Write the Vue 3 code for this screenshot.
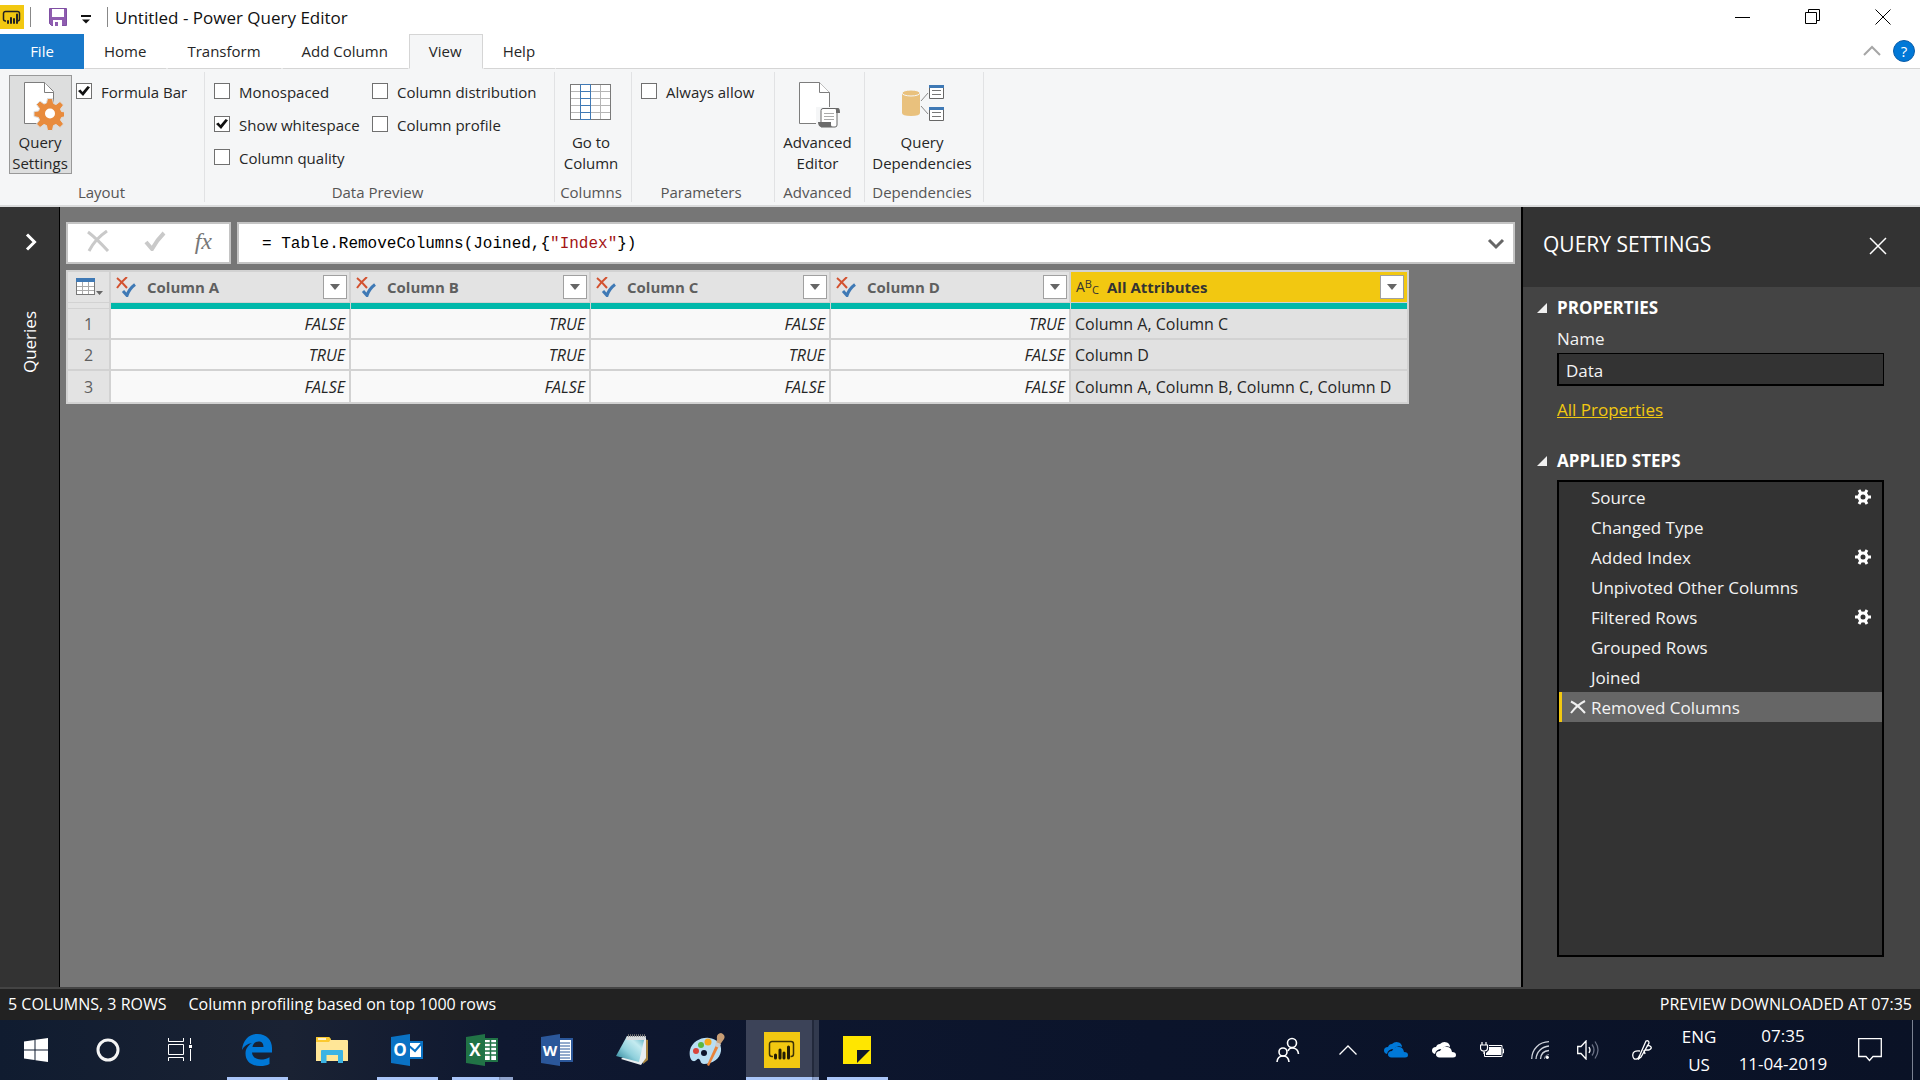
<script setup>
import { ref } from 'vue'

const tabs = ['Home', 'Transform', 'Add Column', 'View', 'Help']
const activeTab = ref('View')

const previewOptions = ref([
  [
    { label: 'Monospaced', on: false },
    { label: 'Show whitespace', on: true },
    { label: 'Column quality', on: false },
  ],
  [
    { label: 'Column distribution', on: false },
    { label: 'Column profile', on: false },
  ],
])
const formulaBar = ref(true)
const alwaysAllow = ref(false)

const columns = ['Column A', 'Column B', 'Column C', 'Column D']
const rows = [
  { flags: ['FALSE', 'TRUE', 'FALSE', 'TRUE'], all: 'Column A, Column C' },
  { flags: ['TRUE', 'TRUE', 'TRUE', 'FALSE'], all: 'Column D' },
  { flags: ['FALSE', 'FALSE', 'FALSE', 'FALSE'], all: 'Column A, Column B, Column C, Column D' },
]

const queryName = ref('Data')
const steps = [
  { name: 'Source', gear: true },
  { name: 'Changed Type' },
  { name: 'Added Index', gear: true },
  { name: 'Unpivoted Other Columns' },
  { name: 'Filtered Rows', gear: true },
  { name: 'Grouped Rows' },
  { name: 'Joined' },
  { name: 'Removed Columns' },
]
const selectedStep = ref('Removed Columns')
</script>

<template>
  <div class="window">
    <header class="titlebar">
      <svg class="app-icon" width="24" height="24" viewBox="0 0 24 24" aria-hidden="true">
        <rect width="24" height="24" fill="#f2c811" />
        <path d="M6 16H5.500a2 2 0 0 1-2-2V8.500a2 2 0 0 1 2-2h12a2 2 0 0 1 2 2V14a2 2 0 0 1-2 2" fill="none" stroke="#222" stroke-width="1.500" />
        <path d="M8 18v-2M11 18v-5M14 18v-4M17 18V9.500" stroke="#222" stroke-width="2" stroke-linecap="round" />
      </svg>
      <span class="bar-sep"></span>
      <button class="plain save" aria-label="Save">
        <svg width="20" height="20" viewBox="0 0 20 20">
          <path d="M1.500 1.500h17v17H3.500l-2-2z" fill="#8f5db0" stroke="#7f4fa3" />
          <path d="M4 2h12v8H4z" fill="#fff" />
          <path d="M5 13h9v6H5z" fill="#fff" />
          <path d="M7 15h3v4H7z" fill="#8f5db0" />
        </svg>
      </button>
      <button class="plain more" aria-label="Customize toolbar">
        <svg width="10" height="9" viewBox="0 0 10 9"><path d="M0 1h10" stroke="#111" stroke-width="2" /><path d="M1 4.500h8L5 8.500z" fill="#111" /></svg>
      </button>
      <span class="bar-sep"></span>
      <h1>Untitled - Power Query Editor</h1>
      <div class="win-buttons">
        <button class="plain" aria-label="Minimize"><svg width="16" height="16" viewBox="0 0 16 16"><path d="M0 8.500h15" stroke="#000" /></svg></button>
        <button class="plain" aria-label="Restore"><svg width="16" height="16" viewBox="0 0 16 16"><path d="M.5 3.500h11v11H.5zM3.500 3.500v-3h11v11h-3" fill="none" stroke="#000" /></svg></button>
        <button class="plain" aria-label="Close"><svg width="16" height="16" viewBox="0 0 16 16"><path d="M.5.500l15 15M15.500.500l-15 15" stroke="#000" /></svg></button>
      </div>
    </header>

    <nav class="tabs">
      <button class="file">File</button>
      <button v-for="t in tabs" :key="t" class="tab" :class="{ active: t === activeTab }" @click="activeTab = t">{{ t }}</button>
      <span class="tabs-fill">
        <button class="plain" aria-label="Collapse ribbon"><svg width="18" height="12" viewBox="0 0 18 12"><path d="M1 10l8-8 8 8" fill="none" stroke="#a6a6a6" stroke-width="2" /></svg></button>
        <button class="help" aria-label="Help topics">?</button>
      </span>
    </nav>

    <section class="ribbon">
      <div class="group g-layout">
        <div class="group-body">
          <button class="big pressed">
            <svg width="48" height="56" viewBox="0 0 48 56">
              <path d="M8.500 6.500h20l9 9v32h-29z" fill="#fff" stroke="#7d7d7d" />
              <path d="M28.500 6.500v10h9" fill="#fff" stroke="#7d7d7d" />
              <g fill="#e88b3d" stroke="#dddede" stroke-width="1">
                <path d="M31.500 22.500h5l1 5 2.500 1 4-3 3.500 3.500-3 4 1 2.500 4.500.5v4.500l-4.500 1-1 2.500 3 4-3.500 3.500-4-3-2.500 1-1 5h-5l-1-5-2.500-1-4 3-3.500-3.500 3-4-1-2.500-4.500-1V35.500l4.500-.5 1-2.500-3-4 3.500-3.500 4 3 2.500-1z" />
                <circle cx="34" cy="37.500" r="5" fill="#fff" stroke="none" />
              </g>
            </svg>
            <span>Query<br>Settings</span>
          </button>
          <div class="checks first">
            <label class="check"><input v-model="formulaBar" type="checkbox"><span>Formula Bar</span></label>
          </div>
        </div>
        <div class="group-name">Layout</div>
      </div>

      <div class="group g-preview">
        <div class="group-body">
          <div v-for="(col, i) in previewOptions" :key="i" class="checks wide">
            <label v-for="o in col" :key="o.label" class="check"><input v-model="o.on" type="checkbox"><span>{{ o.label }}</span></label>
          </div>
        </div>
        <div class="group-name">Data Preview</div>
      </div>

      <div class="group g-columns">
        <div class="group-body">
          <button class="big">
            <svg width="48" height="56" viewBox="0 0 48 56">
              <rect x="3.500" y="8.500" width="40" height="35" fill="#fff" />
              <path d="M4 15.500h39M4 22.500h39M4 29.500h39M4 36.500h39M33.500 9v34" stroke="#b5b5b5" />
              <rect x="3.500" y="8.500" width="40" height="35" fill="none" stroke="#7a7a7a" />
              <path d="M13.500 8.500h10v35h-10zM13.500 15.500h10M13.500 22.500h10M13.500 29.500h10M13.500 36.500h10" fill="none" stroke="#3f79b5" />
            </svg>
            <span>Go to<br>Column</span>
          </button>
        </div>
        <div class="group-name">Columns</div>
      </div>

      <div class="group g-params">
        <div class="group-body">
          <div class="checks">
            <label class="check"><input v-model="alwaysAllow" type="checkbox"><span>Always allow</span></label>
          </div>
        </div>
        <div class="group-name">Parameters</div>
      </div>

      <div class="group g-advanced">
        <div class="group-body">
          <button class="big">
            <svg width="48" height="56" viewBox="0 0 48 56">
              <path d="M6.500 6.500h20l10 10v31h-30z" fill="#fff" stroke="#7d7d7d" />
              <path d="M26.500 6.500v10h10" fill="#fff" stroke="#7d7d7d" />
              <path d="M23 31h25v23H23z" fill="#f5f6f7" />
              <path d="M30 32.500h12a2 2 0 0 1 2 2V49a2 2 0 0 1-2 2H28V34.500a2 2 0 0 1 2-2z" fill="#fff" stroke="#666" />
              <path d="M41 32h4q2 0 2 5h-4v-3q0-2-2-2zM25 46h13v3q0 2 2 2H29q-4 0-4-5z" fill="#6b6b6b" />
              <path d="M31 37.500h10M31 40.500h10M31 43.500h10" stroke="#aaa" />
            </svg>
            <span>Advanced<br>Editor</span>
          </button>
        </div>
        <div class="group-name">Advanced</div>
      </div>

      <div class="group g-deps">
        <div class="group-body">
          <button class="big">
            <svg width="48" height="56" viewBox="0 0 48 56">
              <path d="M4 17v20q0 3 9 3t9-3V17z" fill="#e9c17d" />
              <ellipse cx="13" cy="17" rx="9" ry="3" fill="#e9c17d" stroke="#f5f6f7" />
              <path d="M23 25l7-8M23 30l7 8" stroke="#8a8a8a" />
              <path d="M31.500 9.500h14v13h-14zM31.500 31.500h14v13h-14z" fill="#fff" stroke="#666" />
              <path d="M31 9h15v3H31zM31 31h15v3H31z" fill="#3f79b5" />
              <path d="M34 14.500h9M34 18.500h9M34 36.500h9M34 40.500h9" stroke="#777" />
            </svg>
            <span>Query<br>Dependencies</span>
          </button>
        </div>
        <div class="group-name">Dependencies</div>
      </div>
    </section>

    <main class="workspace">
      <aside class="rail">
        <button class="plain" aria-label="Expand queries"><svg width="12" height="18" viewBox="0 0 12 18"><path d="M2 1.500l7.500 7.500L2 16.500" fill="none" stroke="#fff" stroke-width="3" /></svg></button>
        <span class="rail-label">Queries</span>
      </aside>

      <section class="canvas">
        <div class="formula-row">
          <div class="formula-tools">
            <button class="plain" aria-label="Cancel"><svg width="24" height="22" viewBox="0 0 24 22"><path d="M2 2q8 6 20 19M21 1Q9 9 3 21" fill="none" stroke="#c9c9c9" stroke-width="3" /></svg></button>
            <button class="plain commit" aria-label="Commit"><svg width="22" height="20" viewBox="0 0 22 20"><path d="M2 11l6 7Q13 9 20 2" fill="none" stroke="#c9c9c9" stroke-width="4" /></svg></button>
            <button class="plain fx" aria-label="Insert step">fx</button>
          </div>
          <div class="formula">
            <div class="formula-text" role="textbox" aria-label="Formula" contenteditable="true" spellcheck="false">= Table.RemoveColumns(Joined,{<span class="str">"Index"</span>})</div>
            <button class="plain" aria-label="Expand formula bar"><svg width="18" height="12" viewBox="0 0 18 12"><path d="M2 2l7 7 7-7" fill="none" stroke="#666" stroke-width="3" /></svg></button>
          </div>
        </div>

        <table class="grid">
          <thead>
            <tr>
              <th class="num">
                <button class="plain" aria-label="Table options">
                  <svg width="27" height="18" viewBox="0 0 27 18">
                    <rect x=".5" y=".5" width="18" height="16" fill="#fff" stroke="#777" />
                    <path d="M1 8.500h17M1 12.500h17M6.500 4v12M12.500 4v12" stroke="#aaa" />
                    <path d="M0 0h19v4H0z" fill="#3f79b5" />
                    <path d="M20 13h7l-3.500 4z" fill="#666" />
                  </svg>
                </button>
              </th>
              <th v-for="c in columns" :key="c" class="flag">
                <div class="head">
                  <svg width="20" height="20" viewBox="0 0 20 20"><path d="M1 1q5 4 10 10M11 0Q5 5 1 11" fill="none" stroke="#d35230" stroke-width="2" /><path d="M7 14l4 4.500Q13 12 19 7.500" fill="none" stroke="#3f79b5" stroke-width="3" /></svg>
                  <span>{{ c }}</span>
                  <button class="filter" :aria-label="'Filter ' + c"><svg width="10" height="6" viewBox="0 0 10 6"><path d="M0 0h10L5 6z" fill="#666" /></svg></button>
                </div>
              </th>
              <th class="all">
                <div class="head">
                  <span class="abc">A<sup>B</sup><sub>C</sub></span>
                  <span>All Attributes</span>
                  <button class="filter" aria-label="Filter All Attributes"><svg width="10" height="6" viewBox="0 0 10 6"><path d="M0 0h10L5 6z" fill="#666" /></svg></button>
                </div>
              </th>
            </tr>
            <tr class="quality"><td></td><td v-for="n in 5" :key="n"></td></tr>
          </thead>
          <tbody>
            <tr v-for="(r, i) in rows" :key="i">
              <th class="num">{{ i + 1 }}</th>
              <td v-for="(f, j) in r.flags" :key="j" class="flag">{{ f }}</td>
              <td class="all">{{ r.all }}</td>
            </tr>
          </tbody>
        </table>
      </section>

      <aside class="settings">
        <div class="settings-head">
          <h2>QUERY SETTINGS</h2>
          <button class="plain" aria-label="Close pane"><svg width="18" height="18" viewBox="0 0 18 18"><path d="M1 1l16 16M17 1L1 17" stroke="#fff" stroke-width="1.500" /></svg></button>
        </div>
        <div class="settings-body">
          <h3><svg width="10" height="10" viewBox="0 0 10 10"><path d="M10 0v10H0z" fill="#f0f0f0" /></svg>PROPERTIES</h3>
          <div class="indent">
            <label for="query-name">Name</label>
            <input id="query-name" v-model="queryName" type="text">
            <a href="#">All Properties</a>
          </div>
          <h3><svg width="10" height="10" viewBox="0 0 10 10"><path d="M10 0v10H0z" fill="#f0f0f0" /></svg>APPLIED STEPS</h3>
          <ul class="steps">
            <li v-for="s in steps" :key="s.name" :class="{ selected: s.name === selectedStep }" @click="selectedStep = s.name">
              <span class="del"><svg v-if="s.name === selectedStep" width="16" height="14" viewBox="0 0 16 14"><path d="M1 1.500Q8 5 15 13M15 1Q7 5 1 13" fill="none" stroke="#f0f0f0" stroke-width="2" /></svg></span>
              <span class="step-name">{{ s.name }}</span>
              <button v-if="s.gear" class="plain" :aria-label="'Edit ' + s.name">
                <svg width="16" height="16" viewBox="0 0 16 16">
                  <path d="M0 8h16M4 1l8 14M12 1L4 15" stroke="#fff" stroke-width="3" />
                  <circle cx="8" cy="8" r="4" fill="#333" stroke="#fff" stroke-width="3" />
                </svg>
              </button>
            </li>
          </ul>
        </div>
      </aside>
    </main>

    <footer class="status">
      <span>5 COLUMNS, 3 ROWS</span>
      <span>Column profiling based on top 1000 rows</span>
      <span class="right">PREVIEW DOWNLOADED AT 07:35</span>
    </footer>

    <div class="taskbar">
      <button class="sys" aria-label="Start"><svg width="24" height="24" viewBox="0 0 24 24"><path d="M0 3.500L10.500 2v9.500H0zM11.500 1.800L24 0v11.500H11.500zM0 12.500h10.500V22L0 20.500zM11.500 12.500H24V24l-12.500-1.800z" fill="#fff" /></svg></button>
      <button class="sys" aria-label="Cortana"><svg width="24" height="24" viewBox="0 0 24 24"><circle cx="12" cy="12" r="10" fill="none" stroke="#f4f4f4" stroke-width="3" /></svg></button>
      <button class="sys" aria-label="Task View"><svg width="24" height="24" viewBox="0 0 24 24"><path d="M.5 0v3.500h15V0M.5 6.500h15v10H.5zM.5 23v-3.500h15V23M22.500 0v6M22.500 11v12" fill="none" stroke="#fff" /><path d="M21 7h3v3h-3z" fill="#fff" /></svg></button>

      <button class="task open" aria-label="Edge">
        <svg width="32" height="32" viewBox="0 0 32 32"><path d="M1 16C2 6 8 0 16.500 0 26 0 31 6.500 31 14v4.500H11c.3 4.500 4 7 9 7 3 0 6-.8 8.500-2.300V30C26 31.500 23 32 19 32 10 32 4.500 27 4.500 19.500 4.500 14.500 7.500 11 11 9 6.500 9.500 3 12 1 16zM11.500 13h11c0-3.500-1.500-5.500-5-5.500-3.300 0-5.500 2.200-6 5.500z" fill="#0078d7" /></svg>
      </button>
      <button class="task" aria-label="File Explorer">
        <svg width="32" height="28" viewBox="0 0 32 28"><path d="M0 2q0-1 1-1h12l2 3h16q1 0 1 1v20H0z" fill="#ffe697" /><path d="M0 2q0-1 1-1h12l2 2-2 3H0z" fill="#fbc92f" /><path d="M2 3h8" stroke="#fff" stroke-width="1.500" /><path d="M5 27V15q0-1 1-1h20q1 0 1 1v12h-5v-8H10.500v8z" fill="#3bb3e4" /></svg>
      </button>
      <button class="task open" aria-label="Outlook">
        <svg width="32" height="32" viewBox="0 0 32 32"><path d="M16 8h15v16H16z" fill="#fff" stroke="#0a72c4" stroke-width="2" /><path d="M17 11l7 6 7-8" fill="none" stroke="#0a72c4" stroke-width="2" /><path d="M0 3l19-3v32L0 29z" fill="#0a72c4" /><text x="9" y="22" class="office">O</text></svg>
      </button>
      <button class="task open stacked" aria-label="Excel">
        <svg width="32" height="32" viewBox="0 0 32 32"><path d="M16 5h15v22H16z" fill="#fff" stroke="#217346" stroke-width="2" /><path d="M19 9h11M19 13h11M19 17h11M19 21h11M24.500 6v20" stroke="#217346" stroke-width="1.500" /><path d="M0 3l19-3v32L0 29z" fill="#217346" /><text x="9" y="22" class="office">X</text></svg>
      </button>
      <button class="task" aria-label="Word">
        <svg width="32" height="32" viewBox="0 0 32 32"><path d="M16 5h15v22H16z" fill="#fff" stroke="#2b579a" stroke-width="2" /><path d="M19 9h10M19 12h10M19 15h10M19 18h10M19 21h10M19 24h10" stroke="#2b579a" /><path d="M0 3l19-3v32L0 29z" fill="#2b579a" /><text x="9" y="22" class="office small">W</text></svg>
      </button>
      <button class="task" aria-label="Notepad">
        <svg width="34" height="34" viewBox="0 0 34 34">
          <defs><linearGradient id="pad" x1="0" y1="1" x2="1" y2="0"><stop offset="0" stop-color="#1f7a90" /><stop offset=".4" stop-color="#8fd0dc" /><stop offset=".7" stop-color="#c4ebf0" /><stop offset="1" stop-color="#4aa5b8" /></linearGradient></defs>
          <path d="M29 6l4 1v20l-5 4z" fill="#a8853f" />
          <path d="M31 4v21l-5 7-20-6z" fill="#e9eef0" />
          <path d="M12 3h18l-6 26L1 23z" fill="url(#pad)" />
          <path d="M12 3h19l-1 4H11z" fill="#d8dcde" />
          <path d="M13 2.500h18" stroke="#777" stroke-width="2.500" stroke-dasharray="1 1" />
        </svg>
      </button>
      <button class="task" aria-label="Paint">
        <svg width="36" height="34" viewBox="0 0 36 34">
          <path d="M1 17C3 9 12 4 20 5c8 1 13 6 12 13-1 8-9 13-17 13-4 0-3-4-5-5s-3 3-6 2c-3-1-4-7-3-11z" fill="#b9def3" />
          <circle cx="15" cy="20" r="3" fill="#0c142b" />
          <circle cx="7" cy="18" r="3" fill="#d9433a" /><circle cx="12" cy="12" r="3" fill="#5bb840" /><circle cx="19" cy="9" r="3.500" fill="#f7a81b" />
          <path d="M27 12l3 1-10 20-2-1z" fill="#e8833a" />
          <path d="M27 12l1-6q-1-5 4-6 5 2 3 6l-5 7z" fill="#c79d74" /><path d="M27 9l5 2-2 4-4-2z" fill="#ccc" />
        </svg>
      </button>
      <button class="task open stacked current" aria-label="Power BI">
        <svg width="36" height="36" viewBox="0 0 36 36">
          <rect width="36" height="36" fill="#f2c811" />
          <path d="M9 24.500H8a2.500 2.500 0 0 1-2.500-2.500V12A2.500 2.500 0 0 1 8 9.500h19a2.500 2.500 0 0 1 2.500 2.500v10a2.500 2.500 0 0 1-2.500 2.500h-.5" fill="none" stroke="#3c3208" stroke-width="1.500" />
          <path d="M11.500 26v-3M16 26v-8M20 26v-5M24.500 26V15" stroke="#221c05" stroke-width="3" stroke-linecap="round" />
        </svg>
      </button>
      <button class="task open" aria-label="Sticky Notes">
        <svg width="28" height="28" viewBox="0 0 28 28"><path d="M0 0h28v28H0z" fill="#ffe600" /><path d="M14 14h13L14 27z" fill="#10162a" /></svg>
      </button>

      <div class="tray">
        <span class="slot people"><svg width="24" height="26" viewBox="0 0 24 26" fill="none" stroke="#fff" stroke-width="1.600"><circle cx="16" cy="6" r="4.500" /><circle cx="7" cy="15" r="4" /><path d="M12 14q1-3 4-3 6 0 6.500 6M1 25q.5-6 6-6t6 6" /></svg></span>
        <span class="slot"><svg width="18" height="10" viewBox="0 0 18 10"><path d="M.5 9.500L9 1l8.500 8.500" fill="none" stroke="#fff" stroke-width="1.300" /></svg></span>
        <span v-for="c in ['#0078d7', '#ffffff']" :key="c" class="slot">
          <svg width="24" height="16" viewBox="0 0 24 16">
            <path d="M3 12Q0 11 0 8.500 0 5 4 5 5 2 8 2q3-3 7-1.500Q18 2 18 5 13 3 10 7q-6 0-7 5z" :fill="c" />
            <path d="M7.500 15.500Q4 15 4 12.500 4 9 8 9q3-5 7-4 4 0 5 5 4 0 4 3 0 2.500-3 2.500z" :fill="c" />
          </svg>
        </span>
        <span class="slot"><svg width="24" height="16" viewBox="0 0 24 16"><path d="M9 3.500h13v11H4.500V10M22.500 7h1v4h-1" fill="none" stroke="#fff" /><path d="M9 5h12v8H6v-2l3-3z" fill="#fff" /><path d="M2 0v3M6 0v3M.5 3h7v3q0 3-3.500 3T.5 6zM4 9v3" fill="none" stroke="#fff" stroke-width="1.200" /></svg></span>
        <span class="slot"><svg width="18" height="18" viewBox="0 0 18 18" fill="none"><path d="M.7 18C1 8 8 1 18 .7M5 18C5.500 11 11 5.500 18 5M9.500 18Q10 10 18 9.500" stroke="#cfd3dc" stroke-width="1.300" /><path d="M13.500 18q0-4 4.500-4.500" stroke="#8a90a0" /><circle cx="16.300" cy="16.300" r="1.600" fill="#fff" /></svg></span>
        <span class="slot"><svg width="23" height="20" viewBox="0 0 23 20" fill="none"><path d="M.7 6.500H4L9 1v18l-5-5.500H.7z" stroke="#fff" stroke-width="1.300" /><path d="M12 7q2 3 0 6" stroke="#fff" stroke-width="1.300" /><path d="M15 4.500q4 5.500 0 11M18 1.500q6 8.500 0 17" stroke="#697084" stroke-width="1.300" /></svg></span>
        <span class="slot pen"><svg width="20" height="20" viewBox="0 0 20 20" fill="none" stroke="#fff" stroke-width="1.300"><path d="M7 17L14 1q3-1 3 2L9 17l-2.500 2z" /><path d="M8 11Q1 10 .7 15q.3 5 4 4 3-1 3-4M13 10h4q4-2 1-4-2-1-3 0M12 10l1 4" /></svg></span>
        <span class="slot lang">ENG<br>US</span>
        <span class="slot clock">07:35<br>11-04-2019</span>
        <span class="slot note"><svg width="24" height="24" viewBox="0 0 24 24"><path d="M.7.700h22.600v17.800H15L11.500 22.500 8 18.500H.7z" fill="none" stroke="#fff" stroke-width="1.300" /></svg></span>
        <span class="desk"></span>
      </div>
    </div>
  </div>
</template>

<style>
body { margin: 0; background: #767676; }
</style>

<style scoped>
.window {
  display: flex;
  flex-direction: column;
  min-height: 100vh;
  font-family: "Open Sans", "Noto Sans", sans-serif;
  font-size: 15px;
  color: #262626;
}
.window *, .window *::before { box-sizing: border-box; }
svg { display: block; flex: none; }
button, input { font: inherit; color: inherit; }
.plain { display: flex; align-items: center; justify-content: center; padding: 0; border: 0; background: none; }
h1, h2, h3, ul { margin: 0; padding: 0; }

.titlebar { display: flex; align-items: center; height: 34px; background: #fff; }
.bar-sep { width: 1px; height: 20px; background: #888; margin-left: 6px; }
.save { margin-left: 17px; }
.more { margin: 4px 10px 0 13px; }
.more + .bar-sep { margin-left: 6px; }
h1 { margin-left: 7px; font-size: 17px; font-weight: 400; color: #111; }
.win-buttons { display: flex; margin-left: auto; padding-right: 2px; }
.win-buttons .plain { width: 70px; height: 34px; }

.tabs { display: flex; height: 35px; background: #fff; }
.tabs button { white-space: nowrap; }
.file { width: 84px; padding: 0 0 2px; border: 0; background: #1979ca; color: #fff; }
.tab { padding: 0 20px 2px 19px; border: 1px solid transparent; border-bottom-color: #d5d5d5; background: #fff; }
.tab.active { border-color: #d5d5d5; border-bottom-color: #f5f6f7; background: #f5f6f7; }
.tabs-fill { flex: 1; display: flex; align-items: center; justify-content: flex-end; gap: 12px; padding-right: 5px; border-bottom: 1px solid #d5d5d5; }
.help { width: 22px; height: 22px; padding: 0; border: 1px solid #0a5ca8; border-radius: 50%; background: #0078d7; color: #fff; line-height: 20px; }

.ribbon { display: flex; height: 138px; padding: 3px 0; background: #f5f6f7; border-bottom: 2px solid #dadbdc; }
.group { display: flex; flex-direction: column; flex: none; border-right: 1px solid #e1e2e4; }
.group-body { display: flex; justify-content: center; padding: 3px 4px 0 0; }
.group-name { margin-top: auto; padding-right: 4px; text-align: center; line-height: 20px; color: #555; }
.g-layout { width: 205px; }
.g-layout .group-name { padding-right: 1px; }
.g-preview { width: 350px; }
.g-columns { width: 77px; }
.g-params { width: 143px; }
.g-layout .group-body, .g-preview .group-body, .g-params .group-body { justify-content: flex-start; padding-left: 9px; }
.g-advanced { width: 90px; }
.g-deps { width: 119px; }
.big { display: flex; flex-direction: column; align-items: center; height: 99px; padding: 0; border: 1px solid transparent; background: none; line-height: 21px; }
.pressed { width: 63px; padding-right: 1px; border-color: #999; background: #dddede; }
.checks { display: flex; flex-direction: column; gap: 13px; padding-top: 6px; }
.checks.first { padding-left: 4px; }
.checks.wide { width: 158px; }
.check { display: flex; align-items: center; height: 20px; white-space: nowrap; }
.check span { padding: 2px 0 0 9px; }
.check input { flex: none; display: flex; align-items: center; justify-content: center; appearance: none; width: 16px; height: 16px; margin: 0; border: 1px solid #707070; background: #fff; }
.check input:checked::before { content: ""; width: 12px; height: 10px; background: #111; clip-path: polygon(0 50%, 20% 35%, 38% 60%, 80% 0, 100% 12%, 42% 100%); }

.workspace { display: flex; flex: 1; background: #767676; }
.rail { display: flex; flex-direction: column; align-items: center; width: 60px; padding-top: 26px; background: #333; border-right: 1px solid #000; color: #fff; }
.rail .plain { padding-left: 2px; }
.rail-label { margin-top: 60px; writing-mode: vertical-rl; rotate: 180deg; font-size: 17px; }
.canvas { flex: 1; min-width: 0; padding: 15px 6px 0; }
.formula-row { display: flex; gap: 6px; height: 42px; }
.formula-tools { display: flex; align-items: center; justify-content: space-between; width: 165px; padding: 0 17px 4px 18px; border: 2px solid #c4c4c4; background: #fff; }
.commit { padding-left: 6px; }
.fx { font-family: "Liberation Serif", serif; font-style: italic; font-size: 24px; color: #777; }
.formula { display: flex; align-items: center; flex: 1; border: 2px solid #c4c4c4; background: #fff; padding: 2px 8px 0 23px; }
.formula-text { flex: 1; font-family: "Liberation Mono", monospace; font-size: 16px; color: #000; outline: 0; }
.str { color: #a31515; }

.grid { margin-top: 6px; border: 2px solid #d2d2d2; border-spacing: 0; border-collapse: separate; table-layout: fixed; width: 1343px; background: #f9f9f9; }
.grid th, .grid td { height: 31px; padding: 0; border-right: 2px solid #d2d2d2; border-bottom: 2px solid #d2d2d2; line-height: 20px; white-space: nowrap; }
.grid th { background: #e3e3e3; color: #5f5f5f; }
.grid thead th { border-bottom-width: 1px; }
.grid tbody { font-size: 16px; }
.grid .num { width: 43px; font-weight: 400; text-align: center; }
.num .plain { margin: 0 auto; padding-left: 1px; }
.grid .flag { width: 240px; }
.grid td.flag { padding-right: 4px; text-align: right; font-style: italic; }
.grid tr > :last-child { border-right: 0; }
.grid tbody tr:last-child > * { border-bottom: 0; }
.grid td.all { padding-left: 4px; background: #e1e1e1; }
.grid th.all { background: #f2c811; color: #333; }
.head { display: flex; align-items: center; padding: 0 2px 0 5px; }
.all .head { padding-right: 3px; }
.head > span:not(.abc) { margin-left: 11px; font-weight: 700; }
.abc { display: flex; width: 20px; font-weight: 400; font-size: 14px; }
.abc sup, .abc sub { font-size: 11px; line-height: 14px; }
.abc sub { padding-top: 6px; }
.filter { display: flex; align-items: center; justify-content: center; width: 24px; height: 24px; margin-left: auto; padding: 0; border: 1px solid #a0a0a0; background: #fff; }
.grid .quality td { height: 6px; border-bottom: 0; border-right-width: 1px; background: #01b8aa; }
.grid .quality td:first-child { border-right-width: 2px; border-bottom: 1px solid #d2d2d2; background: #e3e3e3; }

.settings { display: flex; flex-direction: column; width: 399px; border-left: 2px solid #000; background: #444; color: #f3f3f3; font-size: 17px; }
.settings-head { display: flex; align-items: center; justify-content: space-between; height: 80px; padding: 0 33px 6px 20px; background: #333; }
h2 { font-size: 21px; font-weight: 400; color: #fff; }
.settings-head .plain { padding-top: 4px; }
.settings-body { flex: 1; display: flex; flex-direction: column; padding: 9px 36px 30px 14px; }
h3 { display: flex; align-items: center; gap: 10px; font-size: 17px; line-height: 24px; color: #fff; }
.indent { display: flex; flex-direction: column; align-items: flex-start; padding: 6px 0 26px 20px; line-height: 26px; }
.indent input { width: 100%; height: 33px; margin: 1px 0 11px; padding: 2px 7px 0; border: 1px solid #000; border-width: 1px 1px 2px 2px; background: #333; }
.indent a { color: #f2c811; }
.steps { flex: 1; margin: 7px 0 0 20px; border: 2px solid #000; background: #333; list-style: none; }
.steps li { display: flex; align-items: center; height: 30px; padding-right: 11px; border-left: 3px solid transparent; }
.steps li.selected { border-color: #f2c811; background: #666; }
.del { width: 29px; padding-left: 8px; }
.step-name { flex: 1; }

.status { display: flex; align-items: center; gap: 22px; height: 33px; padding: 0 8px 2px; border-top: 2px solid #444; background: #222; color: #fff; font-size: 16px; }
.right { margin-left: auto; }

.taskbar { display: flex; height: 60px; background: linear-gradient(90deg, #101c30 0, #1a2233 15%, #0f1830 26%, #0b142b 60%, #0a1226 100%); color: #fff; }
.sys, .task { display: flex; align-items: center; justify-content: center; padding: 0; border: 0; background: none; }
.sys { width: 72px; }
.task { position: relative; width: 75px; }
.sys:nth-of-type(3) { margin-right: 3px; }
.task.open::after { content: ""; position: absolute; left: 8px; right: 6px; bottom: 0; height: 3px; background: #a9c5f8; }
.task.stacked::after { right: 0; background: linear-gradient(90deg, #a9c5f8 47px, #7387ad 47px, #8fa3cc 49px, #8fa3cc 61px, transparent 61px); }
.task.current::before { content: ""; position: absolute; inset: 0 0 0 2px; background: linear-gradient(90deg, #3c4358 66px, #22293b 66px, #22293b 68px, #323a4e 68px); }
.task.current svg { position: relative; }
.task.current::after { left: 2px; background: linear-gradient(90deg, #a9c5f8 66px, #7387ad 66px, #8fa3cc 68px); }
.office { font-family: "Open Sans", sans-serif; font-size: 17px; font-weight: 700; fill: #fff; text-anchor: middle; }
.office.small { font-size: 15px; }
.tray { display: flex; margin-left: auto; font-size: 17px; line-height: 28px; text-align: center; }
.slot { display: flex; align-items: center; justify-content: center; width: 48px; }
.people { width: 72px; }
.pen { width: 60px; }
.lang { width: 54px; padding-top: 1px; }
.clock { width: 114px; }
.note { width: 60px; }
.desk { width: 8px; margin-left: 12px; border-left: 1px solid #7b8292; }
</style>
